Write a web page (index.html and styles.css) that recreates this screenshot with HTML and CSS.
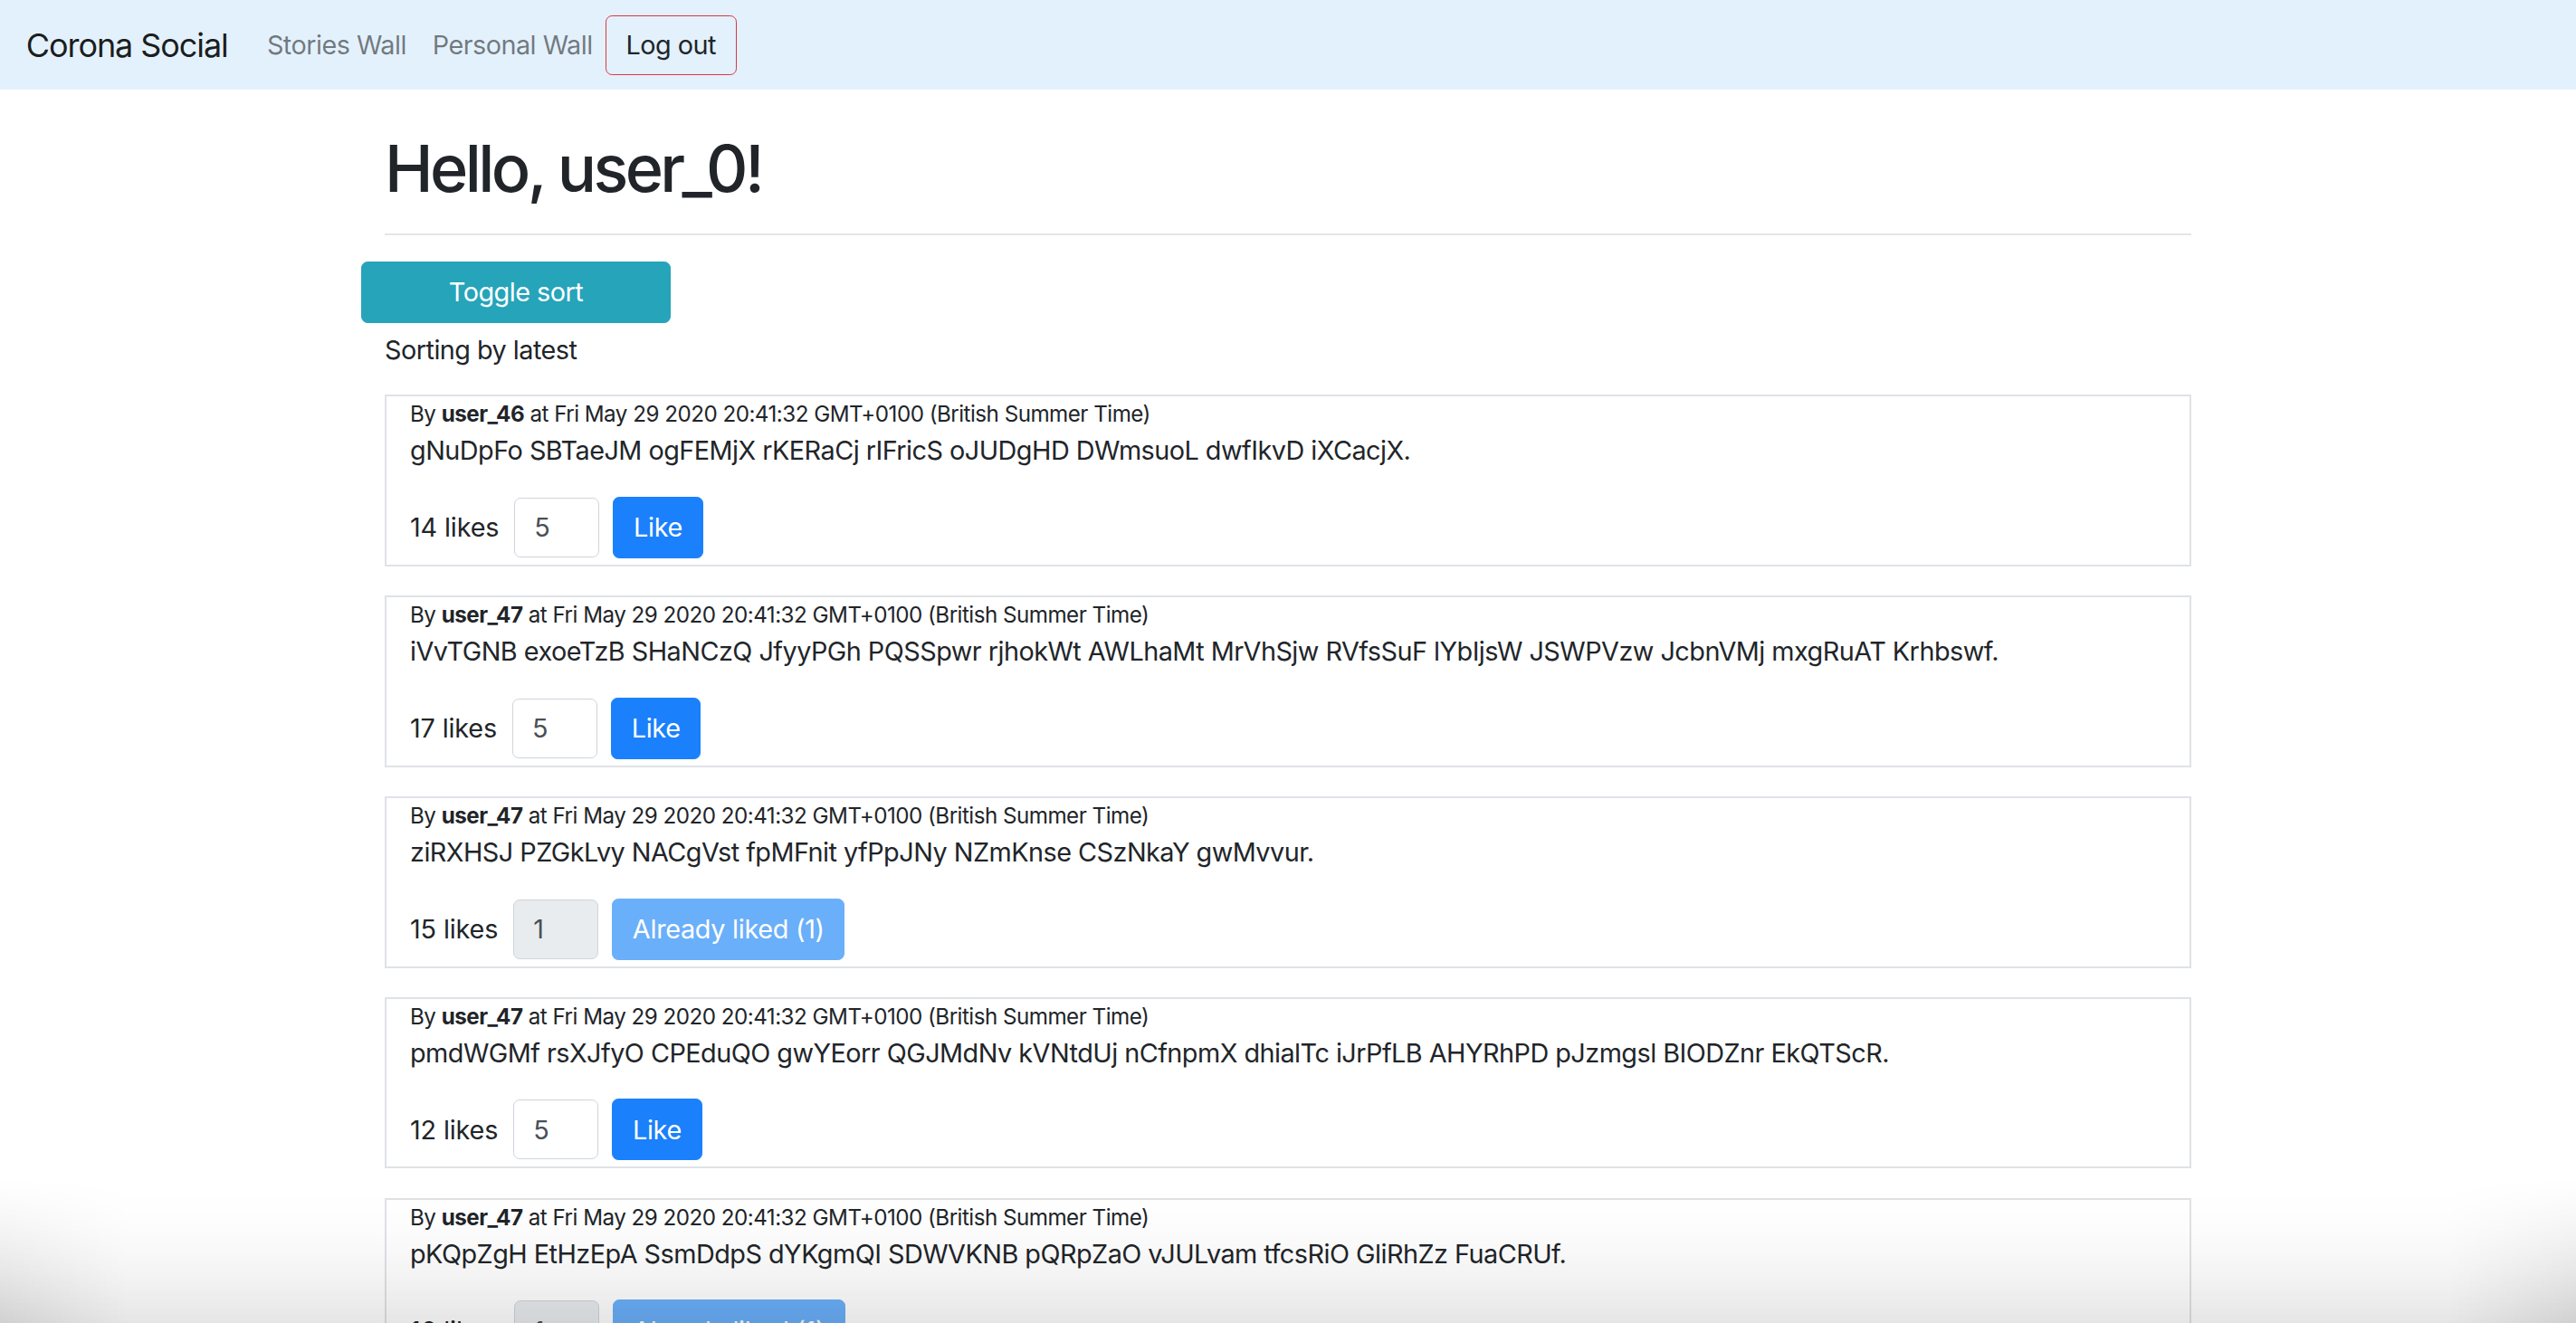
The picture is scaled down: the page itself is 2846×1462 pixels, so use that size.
FILE: index.html
```html
<!DOCTYPE html>
<html lang="en">
<head>
<meta charset="utf-8">
<title>Corona Social</title>
<link rel="stylesheet" href="styles.css">
</head>
<body>
<nav class="navbar">
  <a class="brand" href="#">Corona Social</a>
  <ul class="nav">
    <li><a class="nav-link" href="#">Stories Wall</a></li>
    <li><a class="nav-link" href="#">Personal Wall</a></li>
    <li><button class="btn btn-logout" type="button">Log out</button></li>
  </ul>
</nav>

<main class="container">
  <h1 class="greeting">Hello, user_0!</h1>
  <hr class="divider">
  <button class="btn btn-toggle" type="button">Toggle sort</button>
  <p class="sort-label">Sorting by latest</p>

  <article class="story">
    <div class="story-meta">By <strong>user_46</strong> at Fri May 29 2020 20:41:32 GMT+0100 (British Summer Time)</div>
    <p class="story-text">gNuDpFo SBTaeJM ogFEMjX rKERaCj rIFricS oJUDgHD DWmsuoL dwfIkvD iXCacjX.</p>
    <div class="like-row">
      <span class="likes">14 likes</span>
      <input class="like-input" type="text" value="5">
      <button class="btn btn-like" type="button">Like</button>
    </div>
  </article>

  <article class="story">
    <div class="story-meta">By <strong>user_47</strong> at Fri May 29 2020 20:41:32 GMT+0100 (British Summer Time)</div>
    <p class="story-text">iVvTGNB exoeTzB SHaNCzQ JfyyPGh PQSSpwr rjhokWt AWLhaMt MrVhSjw RVfsSuF lYbIjsW JSWPVzw JcbnVMj mxgRuAT Krhbswf.</p>
    <div class="like-row">
      <span class="likes">17 likes</span>
      <input class="like-input" type="text" value="5">
      <button class="btn btn-like" type="button">Like</button>
    </div>
  </article>

  <article class="story">
    <div class="story-meta">By <strong>user_47</strong> at Fri May 29 2020 20:41:32 GMT+0100 (British Summer Time)</div>
    <p class="story-text">ziRXHSJ PZGkLvy NACgVst fpMFnit yfPpJNy NZmKnse CSzNkaY gwMvvur.</p>
    <div class="like-row">
      <span class="likes">15 likes</span>
      <input class="like-input" type="text" value="1" disabled>
      <button class="btn btn-like btn-liked" type="button" disabled>Already liked (1)</button>
    </div>
  </article>

  <article class="story">
    <div class="story-meta">By <strong>user_47</strong> at Fri May 29 2020 20:41:32 GMT+0100 (British Summer Time)</div>
    <p class="story-text">pmdWGMf rsXJfyO CPEduQO gwYEorr QGJMdNv kVNtdUj nCfnpmX dhialTc iJrPfLB AHYRhPD pJzmgsl BIODZnr EkQTScR.</p>
    <div class="like-row">
      <span class="likes">12 likes</span>
      <input class="like-input" type="text" value="5">
      <button class="btn btn-like" type="button">Like</button>
    </div>
  </article>

  <article class="story">
    <div class="story-meta">By <strong>user_47</strong> at Fri May 29 2020 20:41:32 GMT+0100 (British Summer Time)</div>
    <p class="story-text">pKQpZgH EtHzEpA SsmDdpS dYKgmQI SDWVKNB pQRpZaO vJULvam tfcsRiO GliRhZz FuaCRUf.</p>
    <div class="like-row">
      <span class="likes">16 likes</span>
      <input class="like-input" type="text" value="1" disabled>
      <button class="btn btn-like btn-liked" type="button" disabled>Already liked (1)</button>
    </div>
  </article>
</main>

<div class="window-shade"></div>
</body>
</html>
```

FILE: styles.css
```css
* {
  box-sizing: border-box;
}

html, body {
  margin: 0;
  padding: 0;
}

body {
  font-family: "Inter", "Roboto", "Liberation Sans", sans-serif;
  font-size: 28.8px;
  line-height: 1.5;
  letter-spacing: -0.018em;
  color: #212529;
  background: #ffffff;
  overflow: hidden;
  height: 1462px;
}

/* ---------- navbar ---------- */
.navbar {
  display: flex;
  align-items: center;
  height: 99px;
  padding: 0 28.8px;
  background: #e3f1fc;
}

.brand {
  font-size: 36px;
  line-height: 1.5;
  letter-spacing: -0.03em;
  color: rgba(0, 0, 0, 0.9);
  text-decoration: none;
  margin-right: 28.8px;
}

.nav {
  display: flex;
  align-items: center;
  list-style: none;
  margin: 0;
  padding: 0;
}

.nav-link {
  display: block;
  padding: 14.4px 14.4px;
  color: rgba(0, 0, 0, 0.5);
  text-decoration: none;
}

.btn {
  font-family: inherit;
  font-size: 28.8px;
  line-height: 1.5;
  letter-spacing: -0.01em;
  border: 1.8px solid transparent;
  border-radius: 7.2px;
  padding: 10.8px 21.6px;
  cursor: pointer;
}

.btn-logout {
  background: transparent;
  border-color: #dc3545;
  color: #212529;
  height: 66px;
  padding: 0 21.6px;
  letter-spacing: -0.018em;
}

/* ---------- main ---------- */
.container {
  width: 1996px;
  margin: 0 auto;
}

.greeting {
  font-size: 72px;
  font-weight: 500;
  line-height: 1.2;
  letter-spacing: -0.05em;
  margin: 44px 0 0;
}

.divider {
  border: 0;
  border-top: 2px solid rgba(0, 0, 0, 0.1);
  margin: 28.8px 0;
}

.btn-toggle {
  display: block;
  width: 342px;
  height: 68px;
  margin-left: -26px;
  padding: 0;
  background: #26a4b9;
  border-color: #26a4b9;
  color: #ffffff;
  letter-spacing: -0.018em;
}

.sort-label {
  margin: 8px 0 28px;
}

.story {
  border: 2px solid #dfe2e6;
  padding: 1px 26px 7px;
  margin-bottom: 32.5px;
}

.story-meta {
  font-size: 24.2px;
  line-height: 1.54;
}

.story-meta strong {
  font-weight: 700;
}

.story-text {
  margin: 0 0 29px;
}

.like-row {
  display: flex;
  align-items: center;
}

.likes {
  margin-right: 17px;
  letter-spacing: -0.005em;
}

.like-input {
  width: 94px;
  height: 66px;
  font-family: inherit;
  font-size: 28.8px;
  color: #495057;
  padding: 0 21px;
  border: 1.8px solid #ced4da;
  border-radius: 7.2px;
  background: #ffffff;
  margin-right: 15px;
}

.like-input:disabled {
  background: #e9ecef;
}

.btn-like {
  height: 68px;
  padding: 0 21.6px;
  background: #1b80fb;
  border-color: #1b80fb;
  color: #ffffff;
}

.btn-liked {
  background: #6aaff9;
  border-color: #6aaff9;
  cursor: default;
}

/* ---------- window edge shade (overlays the bottom of the capture) ---------- */
.window-shade {
  position: fixed;
  left: 0;
  right: 0;
  bottom: 0;
  height: 160px;
  pointer-events: none;
  background:
    linear-gradient(to right, rgba(0, 0, 0, 0.09), rgba(0, 0, 0, 0) 140px, rgba(0, 0, 0, 0) calc(100% - 140px), rgba(0, 0, 0, 0.09)),
    linear-gradient(to bottom, rgba(0, 0, 0, 0), rgba(0, 0, 0, 0.1));
  -webkit-mask-image: linear-gradient(to bottom, transparent, #000);
  mask-image: linear-gradient(to bottom, transparent, #000);
}
```
